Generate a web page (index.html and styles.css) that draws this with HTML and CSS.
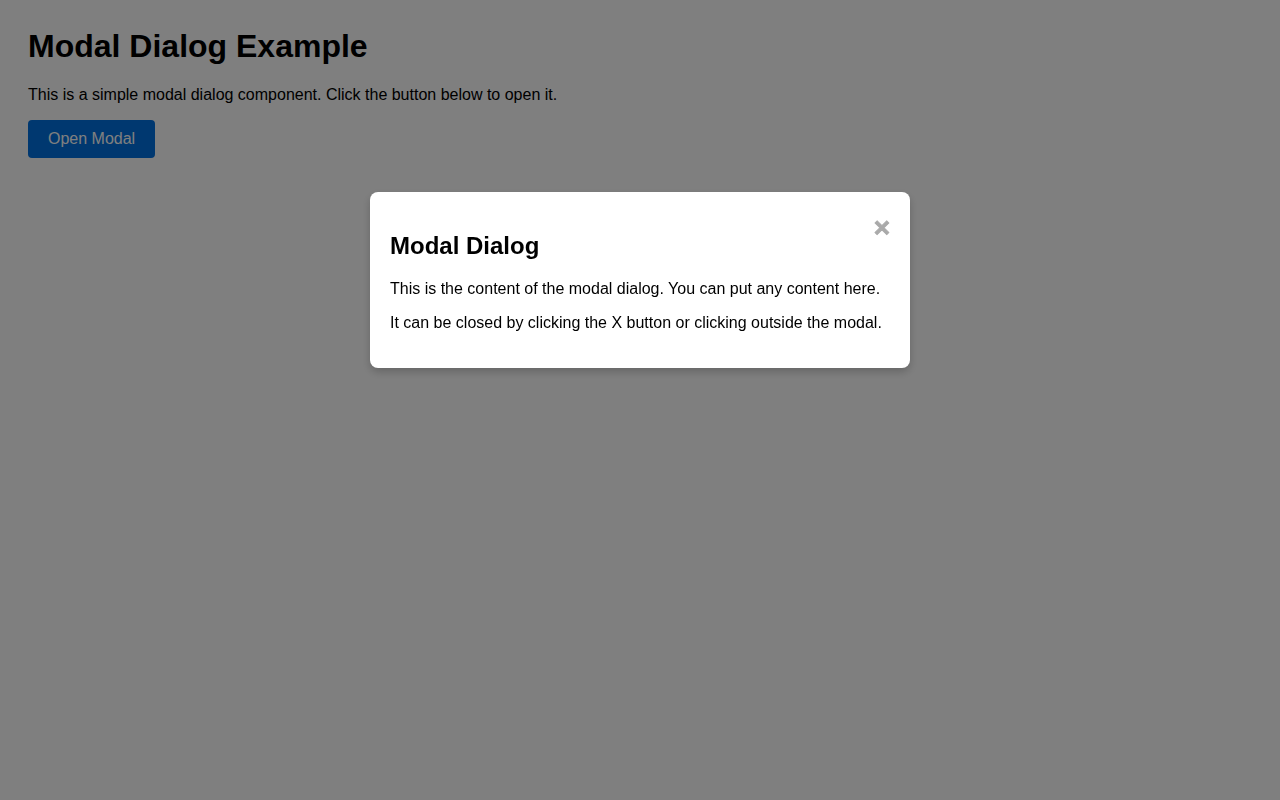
FILE: index.html
```html
<!DOCTYPE html>
<html lang="en">
<head>
    <meta charset="UTF-8">
    <meta name="viewport" content="width=device-width, initial-scale=1.0">
    <title>Modal Dialog Example</title>
    <link rel="stylesheet" href="styles.css">
</head>
<body>

<div class="page">
    <h1>Modal Dialog Example</h1>
    <p>This is a simple modal dialog component. Click the button below to open it.</p>
    <button class="open-btn" id="openModal">Open Modal</button>
</div>

<div class="modal" id="modal">
    <div class="modal-content">
        <span class="close">&times;</span>
        <h2>Modal Dialog</h2>
        <p>This is the content of the modal dialog. You can put any content here.</p>
        <p>It can be closed by clicking the X button or clicking outside the modal.</p>
    </div>
</div>

</body>
</html>
```

FILE: styles.css
```css
body {
    font-family: "Liberation Sans", Arial, sans-serif;
    margin: 8px;
    padding: 20px;
    background-color: #fff;
    color: #000;
}
.page h1 {
    font-size: 32px;
    margin-top: 0;
    margin-bottom: 21px;
}
.page p {
    font-size: 16px;
}
.open-btn {
    font-family: inherit;
    font-size: 16px;
    background-color: #0070e0;
    color: white;
    padding: 10px 20px;
    border: none;
    border-radius: 4px;
    cursor: pointer;
}
.modal {
    position: fixed;
    z-index: 10;
    left: 0;
    top: 0;
    width: 100%;
    height: 100%;
    overflow: auto;
    background-color: rgba(0, 0, 0, 0.5);
}
.modal-content {
    background-color: #fff;
    margin: 15% auto;
    padding: 20px;
    width: 500px;
    border-radius: 8px;
    box-shadow: 0 4px 8px rgba(0, 0, 0, 0.2);
}
.modal-content h2 {
    font-size: 24px;
}
.modal-content p {
    font-size: 16px;
}
.close {
    color: #aaa;
    float: right;
    font-size: 28px;
    font-weight: bold;
    -webkit-text-stroke: 0.8px #aaa;
    cursor: pointer;
}
.close:hover {
    color: black;
}
```
